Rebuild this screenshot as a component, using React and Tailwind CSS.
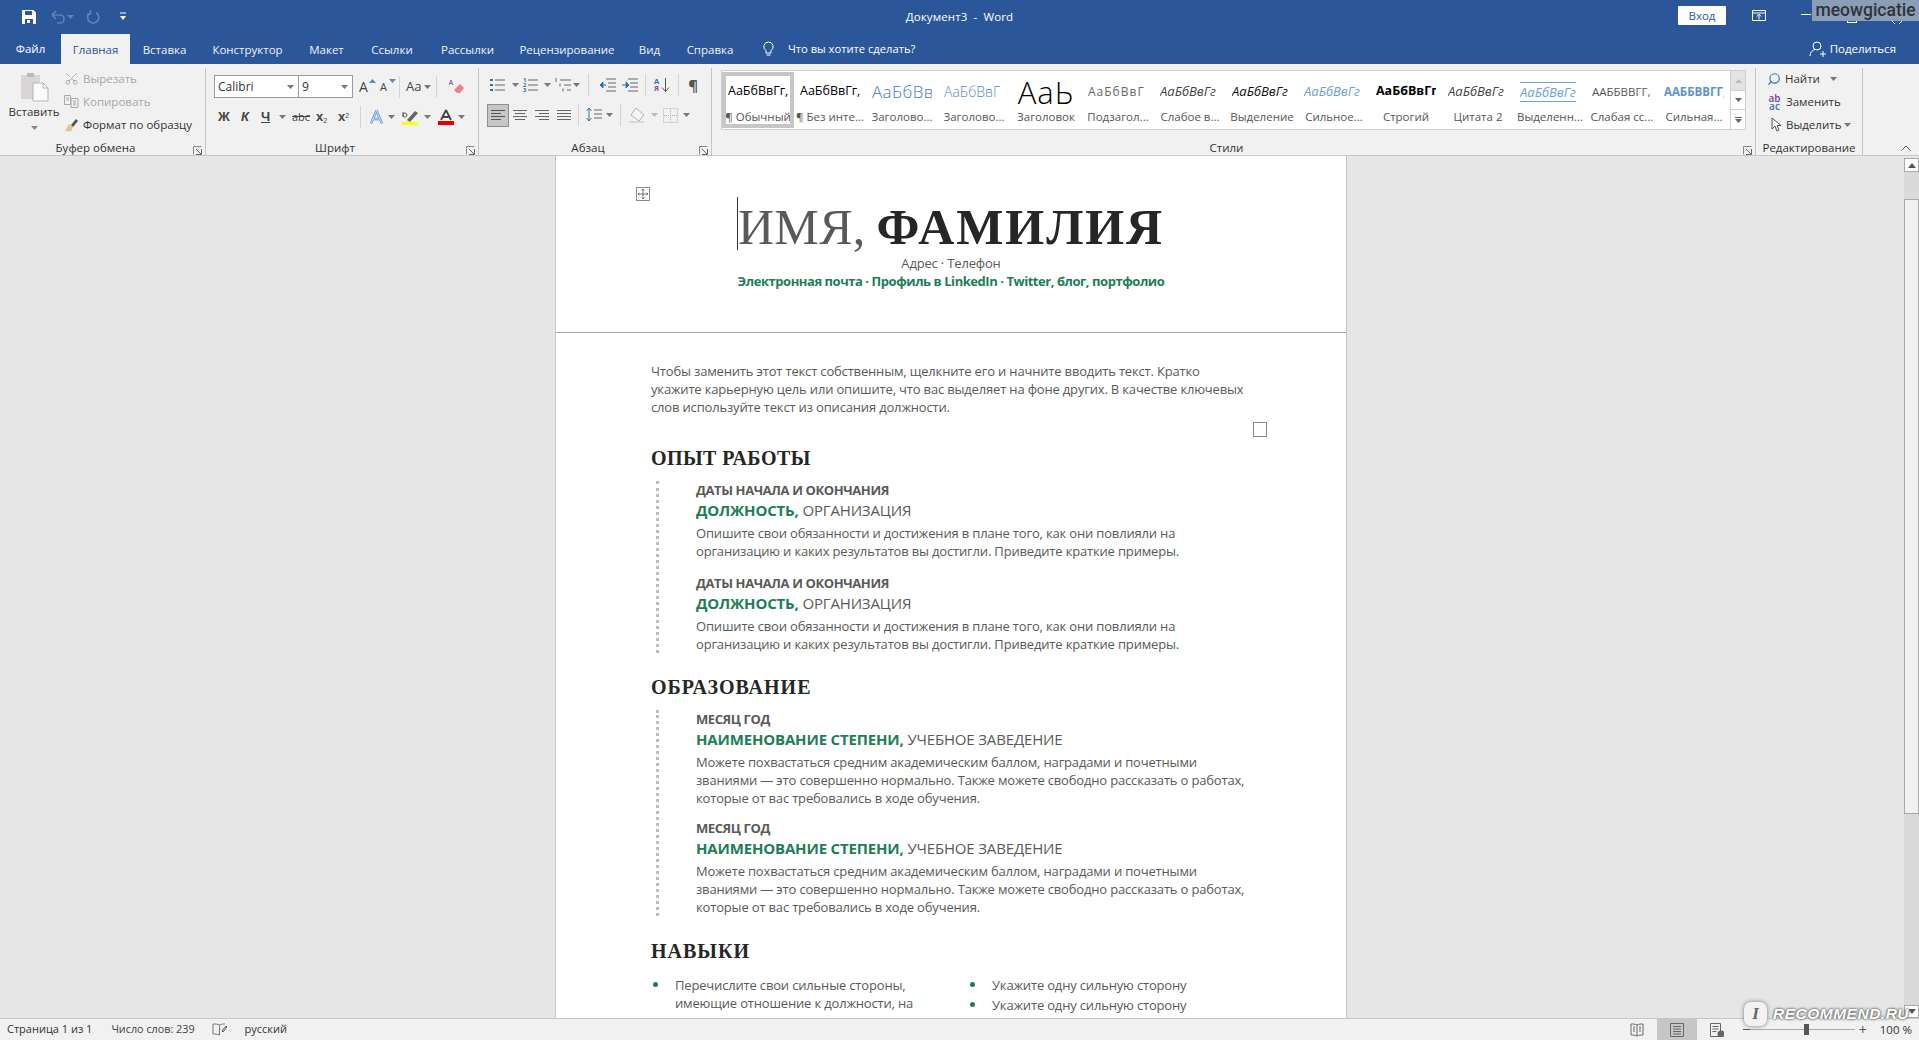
import React from 'react';
import { Scissors, Search } from 'lucide-react';

const Caret = ({ c = '#666', className = '' }) => (
  <svg width="7" height="4" viewBox="0 0 7 4" className={`shrink-0 ${className}`}><path d="M0 0h7L3.5 4z" fill={c} /></svg>
);
const I = ({ w = 16, h = 16, children, className = '' }) => (
  <svg width={w} height={h} viewBox={`0 0 ${w} ${h}`} fill="none" className={`shrink-0 ${className}`}>{children}</svg>
);

const Launcher = () => (
  <I w={9} h={9}><path d="M.5 8.5V.5h8" stroke="#8a8a8a" /><path d="M8.5 3v5.5H3M3 3l5 5" stroke="#666" /></I>
);

const Group = ({ w, label, launcher = true, labelClass = 'pr-[14px]', children }) => (
  <div className={`flex flex-col shrink-0 ${w} h-[88px] mt-[4px] border-r border-[#c6c6c6]`}>
    <div className="flex-1 min-h-0">{children}</div>
    <div className={`relative h-[16px] flex items-center justify-center text-[11.5px] leading-none text-[#333] ${labelClass}`}>
      {label}
      {launcher && <span className="absolute right-[3px] bottom-[1px] flex"><Launcher /></span>}
    </div>
  </div>
);

const tabs = [
  ['Вставка', 'w-[69px]'],
  ['Конструктор', 'w-[97px]'],
  ['Макет', 'w-[61px]'],
  ['Ссылки', 'w-[70px]'],
  ['Рассылки', 'w-[81px]'],
  ['Рецензирование', 'w-[118px]'],
  ['Вид', 'w-[47px]'],
  ['Справка', 'w-[74px]'],
];

function TitleBar() {
  return (
    <div className="relative h-[34px] bg-[#2b579a] flex items-center text-white shrink-0">
      <div className="flex items-center pl-[21px] w-[480px]">
        <I w={16} h={16}>
          <path d="M1.5 1.5h11l2 2v11h-13z" fill="#fff" stroke="#fff" />
          <path d="M4 2h7v4H4z" fill="#2b579a" />
          <path d="M4 10h8v5H4z" fill="#2b579a" />
          <path d="M6 11h3v3H6z" fill="#fff" />
        </I>
        <span className="flex items-center gap-[2px] ml-[13px]">
          <I w={15} h={14}><path d="M2 5h8a4 4 0 0 1 0 8H7M2 5l4-4M2 5l4 4" stroke="#5f83b8" strokeWidth="1.6" /></I>
          <Caret c="#5f83b8" />
        </span>
        <I w={14} h={14} className="ml-[12px]"><path d="M10 2.5a5.6 5.6 0 1 1-5.5 0M4.5 0v4H.8" stroke="#5f83b8" strokeWidth="1.6" /></I>
        <I w={8} h={10} className="ml-[19px]"><path d="M1 1h6" stroke="#fff" /><path d="M1 4h6L4 8z" fill="#fff" /></I>
      </div>
      <div className="flex-1 flex justify-center text-[11.5px] mr-[480px]">
        <span className="tracking-[0.1px]">Документ3&nbsp; -&nbsp; Word</span>
      </div>
      <div className="absolute left-[1678px] top-[6px] w-[48px] h-[19px] bg-white rounded-[1px] flex items-center justify-center text-[11.5px] text-[#2b579a]">Вход</div>
      <span className="absolute left-[1752px] top-[10px] flex">
        <I w={14} h={11}>
          <path d="M.5.5h13v10H.5z" stroke="#fff" />
          <path d="M.5 3h13" stroke="#fff" />
          <path d="M7 9.5V4.5M4.8 6.5 7 4.3l2.2 2.2" stroke="#fff" />
        </I>
      </span>
      <span className="absolute left-[1801px] top-[14px] w-[10px] h-px bg-white" />
      <div className="absolute left-[1812px] top-0 w-[107px] h-[21px] bg-[#8c9db8] flex items-center justify-center text-[#2f3338] text-[17.5px] leading-none font-medium [font-family:Roboto,sans-serif]">meowgicatie</div>
      <span className="absolute left-[1847px] top-[21px] w-[10px] h-[2px] border-x border-b border-white" />
      <span className="absolute left-[1892px] top-[21px] flex"><I w={10} h={3}><path d="M0 0l3 3M10 0 7 3" stroke="#fff" /></I></span>
    </div>
  );
}

function TabBar() {
  return (
    <div className="h-[30px] bg-[#2b579a] flex items-stretch text-[11.5px] text-white shrink-0">
      <div className="w-[61px] flex items-center justify-center">Файл</div>
      <div className="w-[69px] bg-[#f1f1f1] text-[#2b579a] flex items-center justify-center pt-[2px]">Главная</div>
      {tabs.map(([t, w]) => (
        <div key={t} className={`${w} flex items-center justify-center pt-[1px] text-[#eef2f8]`}>{t}</div>
      ))}
      <div className="flex items-center gap-[13px] ml-[15px]">
        <I w={13} h={16}>
          <path d="M6.5 1a4.6 4.6 0 0 0-2.5 8.5V12h5V9.500A4.600 4.600 0 0 0 6.500 1zM4.500 14h4" stroke="#fff" />
        </I>
        <span className="text-[11.2px]">Что вы хотите сделать?</span>
      </div>
      <div className="flex-1" />
      <div className="flex items-center gap-[3px] mr-[23px]">
        <I w={18} h={18}>
          <circle cx="8" cy="6" r="4" stroke="#fff" />
          <path d="M1 16c0-3.500 2.500-6 5-6.500M11 14h6M14 11v6" stroke="#fff" />
        </I>
        <span className="text-[11.5px]">Поделиться</span>
      </div>
    </div>
  );
}

function Clipboard() {
  return (
    <Group w="w-[206px]" label="Буфер обмена">
      <div className="flex">
        <div className="w-[68px] flex flex-col items-center pt-[3px]">
          <I w={29} h={32}>
            <path d="M1 4h19v24H1z" fill="#d8d4d8" />
            <path d="M7 2h7v4H7z" fill="#bcb8bc" />
            <path d="M13 12h10l5 5v13H13z" fill="#fbfbfb" stroke="#b5b5b5" />
            <path d="M23 12v5h5" stroke="#b5b5b5" />
          </I>
          <span className="text-[11.5px] leading-none mt-[3px] text-[#333]">Вставить</span>
          <Caret c="#888" className="mt-[8px]" />
        </div>
        <div className="flex flex-col -ml-[4px] -mt-[1px] text-[11.5px] leading-[23px]">
          <div className="flex items-center gap-[4px] h-[23px] text-[#a8a8a8]">
            <Scissors size={15} strokeWidth={1.3} color="#a0a0a0" className="-scale-x-100 rotate-90" />Вырезать
          </div>
          <div className="flex items-center gap-[4px] h-[23px] text-[#a8a8a8]">
            <I w={15} h={15}><path d="M.500 1.500h6v9h-6zM7 4.500h7v9H7zM9 7h3M9 9h3M9 11h3M2 4h3M2 6h3" stroke="#a8a8a8" /></I>Копировать
          </div>
          <div className="flex items-center gap-[4px] h-[23px] text-[#333]">
            <I w={15} h={15}>
              <path d="M1 14 5 7l4 3-2 4.500z" fill="#e5c38e" />
              <path d="M7 8l5-6 2 2-5 6z" fill="#555" />
            </I>Формат по образцу
          </div>
        </div>
      </div>
    </Group>
  );
}

const Combo = ({ w, text }) => (
  <div className={`${w} h-[23px] bg-white border border-[#9a9a9a] flex items-center justify-between px-[3px] text-[12px] text-[#333] -mr-px`}>
    <span>{text}</span><Caret c="#777" className="mr-[1px]" />
  </div>
);
const VSep = () => <span className="w-px h-[22px] bg-[#d4d4d4] shrink-0 block" />;

function FontGroup() {
  const B = 'font-bold text-[#444] text-[13px] [font-family:"Liberation_Sans",sans-serif] leading-none';
  return (
    <Group w="w-[273px]" label="Шрифт">
      <div className="pl-[8px] pt-[7px]">
        <div className="flex items-center h-[23px]">
          <Combo w="w-[85px]" text="Calibri" />
          <Combo w="w-[55px]" text="9" />
          <div className="flex items-center ml-[7px] text-[#444] text-[13px] leading-none">
            <span className="relative w-[21px] text-[14px]">A<span className="absolute left-[10px] -top-[1px]"><svg width="7" height="4"><path d="M0 4 3.500 0 7 4z" fill="#5a87bd" /></svg></span></span>
            <span className="relative w-[19px] text-[11px]">A<span className="absolute left-[9px] -top-[2px]"><svg width="7" height="4"><path d="M0 0h7L3.500 4z" fill="#5a87bd" /></svg></span></span>
            <VSep />
            <span className="ml-[6px] flex items-center gap-[3px] text-[13px]">Aa<Caret c="#777" /></span>
            <span className="ml-[5px] mr-[12px]"><VSep /></span>
            <I w={16} h={16}>
              <path d="M5 11 11 5l4 4-4 5H8z" fill="#ef7f8b" />
              <path d="M2 1 0 6M2 1l2 5M.700 4.500h2.600" stroke="#8a6f95" />
            </I>
          </div>
        </div>
        <div className="flex items-center h-[23px] mt-[7px] text-[#444]">
          <span className={`${B} w-[23px] pl-[4px]`}>Ж</span>
          <span className={`${B} w-[22px] italic pl-[4px]`}>К</span>
          <span className={`${B} underline w-[20px] pl-[2px]`}>Ч</span>
          <Caret c="#777" className="mr-[6px]" />
          <span className="text-[11px] line-through w-[24px] leading-none">abc</span>
          <span className={`${B} w-[22px]`}>x<sub className="text-[7px] font-normal">2</sub></span>
          <span className={`${B} w-[20px]`}>x<sup className="text-[7px] font-normal">2</sup></span>
          <span className="ml-[2px] mr-[8px]"><VSep /></span>
          <I w={15} h={16}>
            <path d="M7.500 1.500 2 14.500M7.500 1.500 13 14.500M4 10h7" stroke="#5a9bd8" strokeWidth="2.400" />
            <path d="M7.500 1.500 2 14.500M7.500 1.500 13 14.500M4 10h7" stroke="#e3eefa" strokeWidth="0.800" />
          </I>
          <Caret c="#777" className="ml-[4px] mr-[7px]" />
          <I w={17} h={16}>
            <path d="M0 13h16v3H0z" fill="#ffff00" />
            <path d="M5 11l8-9 3 2-8 9z" fill="#666" />
            <path d="M1 3v5M1 6a2 2 0 1 1 0 .100" stroke="#555" />
          </I>
          <Caret c="#777" className="ml-[5px] mr-[7px]" />
          <I w={16} h={16}>
            <path d="M0 12h16v4H0z" fill="#e30000" />
            <path d="M8 1 3 11M8 1l5 10M5 8h6" stroke="#444" strokeWidth="1.800" />
          </I>
          <Caret c="#777" className="ml-[4px]" />
        </div>
      </div>
    </Group>
  );
}

function Paragraph() {
  return (
    <Group w="w-[233px]" label="Абзац">
      <div className="pl-[11px] pt-[5px]">
        <div className="flex items-center h-[24px]">
          <I w={16} h={14}>
            <path d="M0 1h3v2H0zM0 6h3v2H0zM0 11h3v2H0z" fill="#3b6ea8" />
            <path d="M5 2h10M5 7h10M5 12h10" stroke="#666" />
          </I>
          <Caret c="#777" className="ml-[6px] mr-[4px]" />
          <span className="text-[6px] leading-[5px] text-[#3b6ea8] w-[5px] font-bold">1<br />2<br />3</span>
          <I w={11} h={14}><path d="M0 2h10M0 7h10M0 12h10" stroke="#666" /></I>
          <Caret c="#777" className="ml-[5px] mr-[4px]" />
          <I w={17} h={14}>
            <path d="M5 2h11M9 7h7M12 12h4" stroke="#666" />
            <path d="M1 0v4M5 5.500v3M8 10.500v3" stroke="#3b6ea8" />
          </I>
          <Caret c="#777" className="ml-[1px] mr-[8px]" />
          <VSep />
          <I w={17} h={14} className="ml-[10px]">
            <path d="M7 1h10M9 5h8M9 9h8M7 13h10" stroke="#666" />
            <path d="M1 7h6M1 7l3-3v6z" stroke="#2f6fb3" fill="#2f6fb3" />
          </I>
          <I w={17} h={14} className="ml-[5px]">
            <path d="M7 1h10M9 5h8M9 9h8M7 13h10" stroke="#666" />
            <path d="M1 7h6M8 7 5 4v6z" stroke="#2f6fb3" fill="#2f6fb3" />
          </I>
          <span className="ml-[7px] mr-[8px]"><VSep /></span>
          <span className="text-[7.5px] font-bold leading-[7px] text-center">
            <span className="text-[#3b6ea8]">A</span><br /><span className="text-[#8a4f9a]">Я</span>
          </span>
          <I w={9} h={16} className="ml-[2px]"><path d="M4.500 1v13M1 10.500l3.500 4 3.500-4" stroke="#555" /></I>
          <span className="ml-[8px] mr-[9px]"><VSep /></span>
          <span className="text-[15px] text-[#555] font-bold leading-none">¶</span>
        </div>
        <div className="flex items-center h-[24px] mt-[6px]">
          <span className="w-[22px] h-[23px] bg-[#c6c6c6] border border-[#8e8e8e] -ml-[3px] flex items-center justify-center">
            <I w={14} h={11}><path d="M0 .500h14M0 3.500h10M0 6.500h14M0 9.500h10" stroke="#555" /></I>
          </span>
          <I w={14} h={11} className="ml-[4px]"><path d="M0 .500h14M2 3.500h10M0 6.500h14M2 9.500h10" stroke="#666" /></I>
          <I w={14} h={11} className="ml-[8px]"><path d="M0 .500h14M4 3.500h10M0 6.500h14M4 9.500h10" stroke="#666" /></I>
          <I w={14} h={11} className="ml-[8px]"><path d="M0 .500h14M0 3.500h14M0 6.500h14M0 9.500h14" stroke="#666" /></I>
          <span className="ml-[7px] mr-[6px]"><VSep /></span>
          <I w={17} h={16}>
            <path d="M4 1v13M1.500 4 4 1l2.500 3M1.500 11 4 14l2.500-3" stroke="#3b6ea8" />
            <path d="M9 3h8M9 7h8M9 11h8" stroke="#666" />
          </I>
          <Caret c="#777" className="ml-[4px] mr-[7px]" />
          <VSep />
          <I w={19} h={16} className="ml-[8px]">
            <path d="M7 1l8 7-5 6-8-6z" stroke="#b0b0b0" fill="#f5f5f5" />
            <path d="M0 14h15v2H0z" fill="#d8d8d8" />
          </I>
          <Caret c="#bbb" className="ml-[3px] mr-[5px]" />
          <I w={15} h={15}>
            <path d="M.500.500h14v14H.500z" stroke="#b5b5b5" strokeDasharray="1 1" />
            <path d="M7.500 1v13M1 7.500h13" stroke="#b5b5b5" strokeDasharray="1 1" />
          </I>
          <Caret c="#777" className="ml-[5px]" />
        </div>
      </div>
    </Group>
  );
}

const sans = '[font-family:"Open_Sans",sans-serif]';
const styles = [
  { t: 'АаБбВвГг,', l: '¶ Обычный', c: 'text-black text-[12.5px]', sel: true },
  { t: 'АаБбВвГг,', l: '¶ Без инте...', c: 'text-black text-[12.5px]' },
  { t: 'АаБбВвГг', l: 'Заголово...', c: 'text-[#3f7db8] text-[17px] font-light tracking-[0.4px]' },
  { t: 'АаБбВвГ', l: 'Заголово...', c: 'text-[#4f8bc4] text-[14px] font-light' },
  { t: 'АаЬ', l: 'Заголовок', c: 'text-black text-[31px] leading-[26px] font-light tracking-[1px]', big: true },
  { t: 'АаБбВвГ', l: 'Подзагол...', c: 'text-[#666] text-[12px] tracking-[1px]' },
  { t: 'АаБбВвГг', l: 'Слабое в...', c: 'text-[#444] text-[13px] italic' },
  { t: 'АаБбВвГг', l: 'Выделение', c: 'text-[#111] text-[13px] italic' },
  { t: 'АаБбВвГг', l: 'Сильное...', c: 'text-[#6ba1d0] text-[13px] italic' },
  { t: 'АаБбВвГг,', l: 'Строгий', c: 'text-black text-[12.5px] font-bold' },
  { t: 'АаБбВвГг', l: 'Цитата 2', c: 'text-[#444] text-[13px] italic' },
  { t: 'АаБбВвГг', l: 'Выделенн...', c: 'text-[#6ba1d0] text-[13px] italic border-y border-[#6ba1d0] leading-[18px] block' },
  { t: 'ААББВВГГ,', l: 'Слабая сс...', c: 'text-[#555] text-[11.5px]' },
  { t: 'ААББВВГГ,', l: 'Сильная...', c: 'text-[#5c94c8] text-[11.5px] font-bold' },
];

function Styles() {
  return (
    <Group w="w-[1044px]" label="Стили">
      <div className="flex pl-[9px] pt-[2px]">
        <div className="flex h-[60px] w-[1025px] border border-[#d0d0d0] bg-white">
          <div className="flex flex-1">
            {styles.map((s, i) => (
              <div key={i} className={`w-[72px] shrink-0 flex flex-col items-center overflow-hidden ${s.sel ? 'h-[56px] mt-[1px] border-[4px] border-[#c6c6c6]' : 'h-full'}`}>
                <div className={`h-[38px] pt-[3px] w-[60px] shrink-0 flex items-center overflow-hidden ${s.big ? 'justify-center' : 'justify-start'} ${s.sel ? '-mt-[5px]' : ''}`}>
                  <span className={`whitespace-nowrap ${s.c}`}>{s.t}</span>
                </div>
                <span className="text-[11.5px] leading-[16px] text-[#555] whitespace-nowrap">{s.l}</span>
              </div>
            ))}
          </div>
          <div className="w-[15px] flex flex-col border-l border-[#d0d0d0] shrink-0">
            <div className="h-[20px] bg-[#e3e3e3] flex items-center justify-center border-b border-[#d0d0d0]"><svg width="7" height="4"><path d="M0 4 3.500 0 7 4z" fill="#bbb" /></svg></div>
            <div className="h-[19px] flex items-center justify-center border-b border-[#d0d0d0]"><Caret c="#666" /></div>
            <div className="flex-1 flex flex-col gap-[1px] items-center justify-center">
              <span className="w-[7px] h-px bg-[#666]" /><Caret c="#666" />
            </div>
          </div>
        </div>
      </div>
    </Group>
  );
}

function Editing() {
  return (
    <Group w="w-[107px]" label="Редактирование" launcher={false} labelClass="pr-[0px]">
      <div className="flex flex-col pl-[11px] -mt-[1px] text-[11.5px] text-[#333]">
        <div className="flex items-center h-[23px] gap-[4px]">
          <Search size={14} strokeWidth={2} color="#3f72a8" className="-scale-x-100" />
          <span>Найти</span><Caret c="#777" className="ml-[6px]" />
        </div>
        <div className="flex items-center h-[23px] gap-[3px]">
          <span className="text-[10px] leading-[8px] font-semibold text-[#7d3f96] w-[15px] text-center">ab<br /><span className="text-[#3f72a8]">ac</span></span>
          <span className="ml-[1px]">Заменить</span>
        </div>
        <div className="flex items-center h-[23px] gap-[4px] pl-[4px]">
          <I w={11} h={15}><path d="M1 1v11l3-3 2 5 2-1-2-4.500h4z" stroke="#555" fill="#fff" /></I>
          <span>Выделить</span><Caret c="#777" className="-ml-[1px]" />
        </div>
      </div>
    </Group>
  );
}

function Ribbon() {
  return (
    <div className={`h-[92px] bg-[#f1f1f1] border-b border-[#c9c9c9] flex shrink-0 relative ${sans}`}>
      <Clipboard /><FontGroup /><Paragraph /><Styles /><Editing />
      <span className="absolute left-[1901px] bottom-[4px] flex">
        <I w={10} h={6}><path d="M.500 5.500 5 1l4.500 4.500" stroke="#555" /></I>
      </span>
    </div>
  );
}

const green = 'text-[#1e7d56]';
const bodyText = 'text-[13px] leading-[18px] text-[#595959] tracking-[-0.17px] whitespace-nowrap';
const Body = ({ children }) => <p className={bodyText}>{children}</p>;
const H = ({ children, className = '' }) => (
  <h2 className={`[font-family:"Liberation_Serif",serif] font-bold text-[#262626] text-[20px] leading-[24px] ${className}`}>{children}</h2>
);
const Entry = ({ top, bold, rest, lines, className = '' }) => (
  <div className={className}>
    <div className="text-[13px] font-bold leading-[19px] text-[#595959] tracking-[-0.4px]">{top}</div>
    <div className="text-[15px] leading-[20px] text-[#595959] tracking-[-0.16px] whitespace-nowrap"><span className={`font-bold ${green}`}>{bold}</span> {rest}</div>
    <div className="mt-[4px]">{lines.map((l) => <Body key={l}>{l}</Body>)}</div>
  </div>
);
const Rail = ({ children, className = '' }) => (
  <div className={`border-l-[3px] border-dotted border-[#bdbdbd] ml-[5px] pl-[37px] ${className}`}>{children}</div>
);

const jobLines = ['Опишите свои обязанности и достижения в плане того, как они повлияли на', 'организацию и каких результатов вы достигли. Приведите краткие примеры.'];
const eduLines = ['Можете похвастаться средним академическим баллом, наградами и почетными', 'званиями — это совершенно нормально. Также можете свободно рассказать о работах,', 'которые от вас требовались в ходе обучения.'];

function Page() {
  return (
    <div className={`relative w-[792px] ml-[555px] bg-white border-x border-[#c6c6c6] h-[862px] overflow-hidden ${sans}`}>
      <span className="absolute left-[80px] top-[31px] w-[14px] h-[14px] border border-[#8a8a8a] flex items-center justify-center">
        <I w={10} h={10}><path d="M5 0v10M0 5h10M3.600 1.400 5 0l1.400 1.400M3.600 8.600 5 10l1.400-1.400M1.400 3.600 0 5l1.400 1.400M8.600 3.600 10 5 8.600 6.400" stroke="#555" strokeWidth=".8" /></I>
      </span>
      <span className="absolute left-[697px] top-[266px] w-[14px] h-[15px] border border-[#8a8a8a]" />
      <div className="h-[177px] border-b border-[#a6a6a6] flex flex-col items-center pt-[43px] text-center">
        <div className="relative [font-family:'Liberation_Serif',serif] text-[50px] leading-[57px] tracking-[0.35px] text-[#595959] whitespace-nowrap">
          <span className="absolute -left-[1px] -top-[2px] w-px h-[53px] bg-[#333]" />
          ИМЯ, <span className="font-bold text-[#262626] tracking-[1.9px] -ml-[2px]">ФАМИЛИЯ</span>
        </div>
        <div className={`${bodyText} -mt-[2px]`}>Адрес · Телефон</div>
        <div className={`text-[13px] leading-[18px] font-bold tracking-[-0.45px] ${green}`}>Электронная почта · Профиль в LinkedIn · Twitter, блог, портфолио</div>
      </div>
      <div className="pl-[95px] pt-[29px]">
        <Body>Чтобы заменить этот текст собственным, щелкните его и начните вводить текст. Кратко</Body>
        <Body>укажите карьерную цель или опишите, что вас выделяет на фоне других. В качестве ключевых</Body>
        <Body>слов используйте текст из описания должности.</Body>
        <H className="mt-[30px] tracking-[0.45px]">ОПЫТ РАБОТЫ</H>
        <Rail className="mt-[11px]">
          <Entry top="ДАТЫ НАЧАЛА И ОКОНЧАНИЯ" bold="ДОЛЖНОСТЬ," rest="ОРГАНИЗАЦИЯ" lines={jobLines} />
          <Entry className="mt-[14px]" top="ДАТЫ НАЧАЛА И ОКОНЧАНИЯ" bold="ДОЛЖНОСТЬ," rest="ОРГАНИЗАЦИЯ" lines={jobLines} />
        </Rail>
        <H className="mt-[22px] tracking-[1px]">ОБРАЗОВАНИЕ</H>
        <Rail className="mt-[11px]">
          <Entry top="МЕСЯЦ ГОД" bold="НАИМЕНОВАНИЕ СТЕПЕНИ," rest="УЧЕБНОЕ ЗАВЕДЕНИЕ" lines={eduLines} />
          <Entry className="mt-[12px]" top="МЕСЯЦ ГОД" bold="НАИМЕНОВАНИЕ СТЕПЕНИ," rest="УЧЕБНОЕ ЗАВЕДЕНИЕ" lines={eduLines} />
        </Rail>
        <H className="mt-[23px] tracking-[1px]">НАВЫКИ</H>
        <div className={`flex mt-[13px] ${bodyText}`}>
          <div className="w-[319px] flex">
            <span className="w-[5px] h-[5px] rounded-full bg-[#1e7d56] mt-[6px] ml-[2px] mr-[17px] shrink-0" />
            <div>Перечислите свои сильные стороны,<br />имеющие отношение к должности, на</div>
          </div>
          <div>
            <div className="flex h-[20px]"><span className="w-[5px] h-[5px] rounded-full bg-[#1e7d56] mt-[6px] mr-[17px]" />Укажите одну сильную сторону</div>
            <div className="flex"><span className="w-[5px] h-[5px] rounded-full bg-[#1e7d56] mt-[6px] mr-[17px]" />Укажите одну сильную сторону</div>
          </div>
        </div>
      </div>
    </div>
  );
}

function Scrollbar() {
  return (
    <div className="absolute right-0 top-[2px] bottom-0 w-[15px] bg-[#dadada] flex flex-col">
      <div className="h-[14px] bg-white border border-[#a8a8a8] flex items-center justify-center"><svg width="8" height="5"><path d="M0 5 4 0l4 5z" fill="#555" /></svg></div>
      <div className="h-[27px]" />
      <div className="h-[615px] bg-[#f1f1f1] border border-[#a8a8a8]" />
      <div className="flex-1" />
      <div className="h-[13px] bg-white border border-[#a8a8a8] flex items-center justify-center"><svg width="8" height="5"><path d="M0 0h8L4 5z" fill="#555" /></svg></div>
    </div>
  );
}

function Status() {
  return (
    <div className={`relative h-[22px] bg-[#f1f1f1] border-t border-[#c6c6c6] flex items-center text-[11px] text-[#333] shrink-0 ${sans}`}>
      <span className="ml-[7px]">Страница 1 из 1</span>
      <span className="ml-[19px] text-[#444] text-[10.8px]">Число слов: 239</span>
      <span className="ml-[17px] flex">
        <I w={16} h={13}><path d="M7.500 2C6 1 3 1 1 1v10c2 0 4.500 0 6.500 1M7.500 2v10M7.500 2C9 1 11 1 13 1" stroke="#777" /><path d="M10 8l4-5 1 1-4 5z" stroke="#555" /></I>
      </span>
      <span className="ml-[17px]">русский</span>
      <div className="flex-1" />
      <div className="flex items-center h-full">
        <span className="w-[40px] flex justify-center">
          <I w={14} h={14}><path d="M7 2C5 1 3 1 1 1v11c2 0 4 0 6 1 2-1 4-1 6-1V1c-2 0-4 0-6 1zM7 2v11M3 4h2M3 6h2M3 8h2M9 4h2M9 6h2M9 8h2" stroke="#666" /></I>
        </span>
        <span className="w-[40px] h-[21px] bg-[#c6c6c6] flex justify-center items-center">
          <I w={14} h={14}><path d="M.500.500h13v13H.500zM3 3.500h8M3 6h8M3 8.500h8M3 11h8" stroke="#666" /></I>
        </span>
        <span className="w-[40px] flex justify-center">
          <I w={14} h={14}><path d="M.500.500h10v13H.500zM2.500 3.500h6M2.500 6h6M2.500 8.500h4" stroke="#666" /><circle cx="11" cy="11" r="3.500" fill="#666" /></I>
        </span>
        <span className="w-[7px] h-px bg-[#555] ml-[6px]" />
        <span className="w-[105px] h-px bg-[#aaa] relative">
          <span className="absolute left-[54px] w-[5px] h-[11px] bg-[#555] -top-[5px]" />
        </span>
        <span className="text-[14px] leading-none text-[#555] ml-[4px] mr-[13px]">+</span>
        <span className="mr-[7px] text-[#333] text-[11.5px]">100 %</span>
      </div>
    </div>
  );
}

export default function App() {
  return (
    <div className={`relative h-screen w-full overflow-hidden flex flex-col ${sans} bg-[#e6e6e6]`}>
      <TitleBar />
      <TabBar />
      <Ribbon />
      <div className="relative flex-1 min-h-0 bg-[#e6e6e6] overflow-hidden">
        <Page />
        <Scrollbar />
      </div>
      <Status />
      <div className="absolute left-[1744px] top-[1002px] flex items-center gap-[6px] pointer-events-none">
        <span className="w-[23px] h-[24px] rounded-[7px] bg-[#f2f2f2] shadow-[0_0_4px_#777] flex items-center justify-center [font-family:'Liberation_Serif',serif] text-[17px] font-bold italic text-[#666]">I</span>
        <span className="[font-family:'Liberation_Sans',sans-serif] italic font-bold text-[15.5px] text-white [text-shadow:0_0_3px_#555,0_0_2px_#555] tracking-[0.5px]">RECOMMEND.RU</span>
      </div>
    </div>
  );
}
